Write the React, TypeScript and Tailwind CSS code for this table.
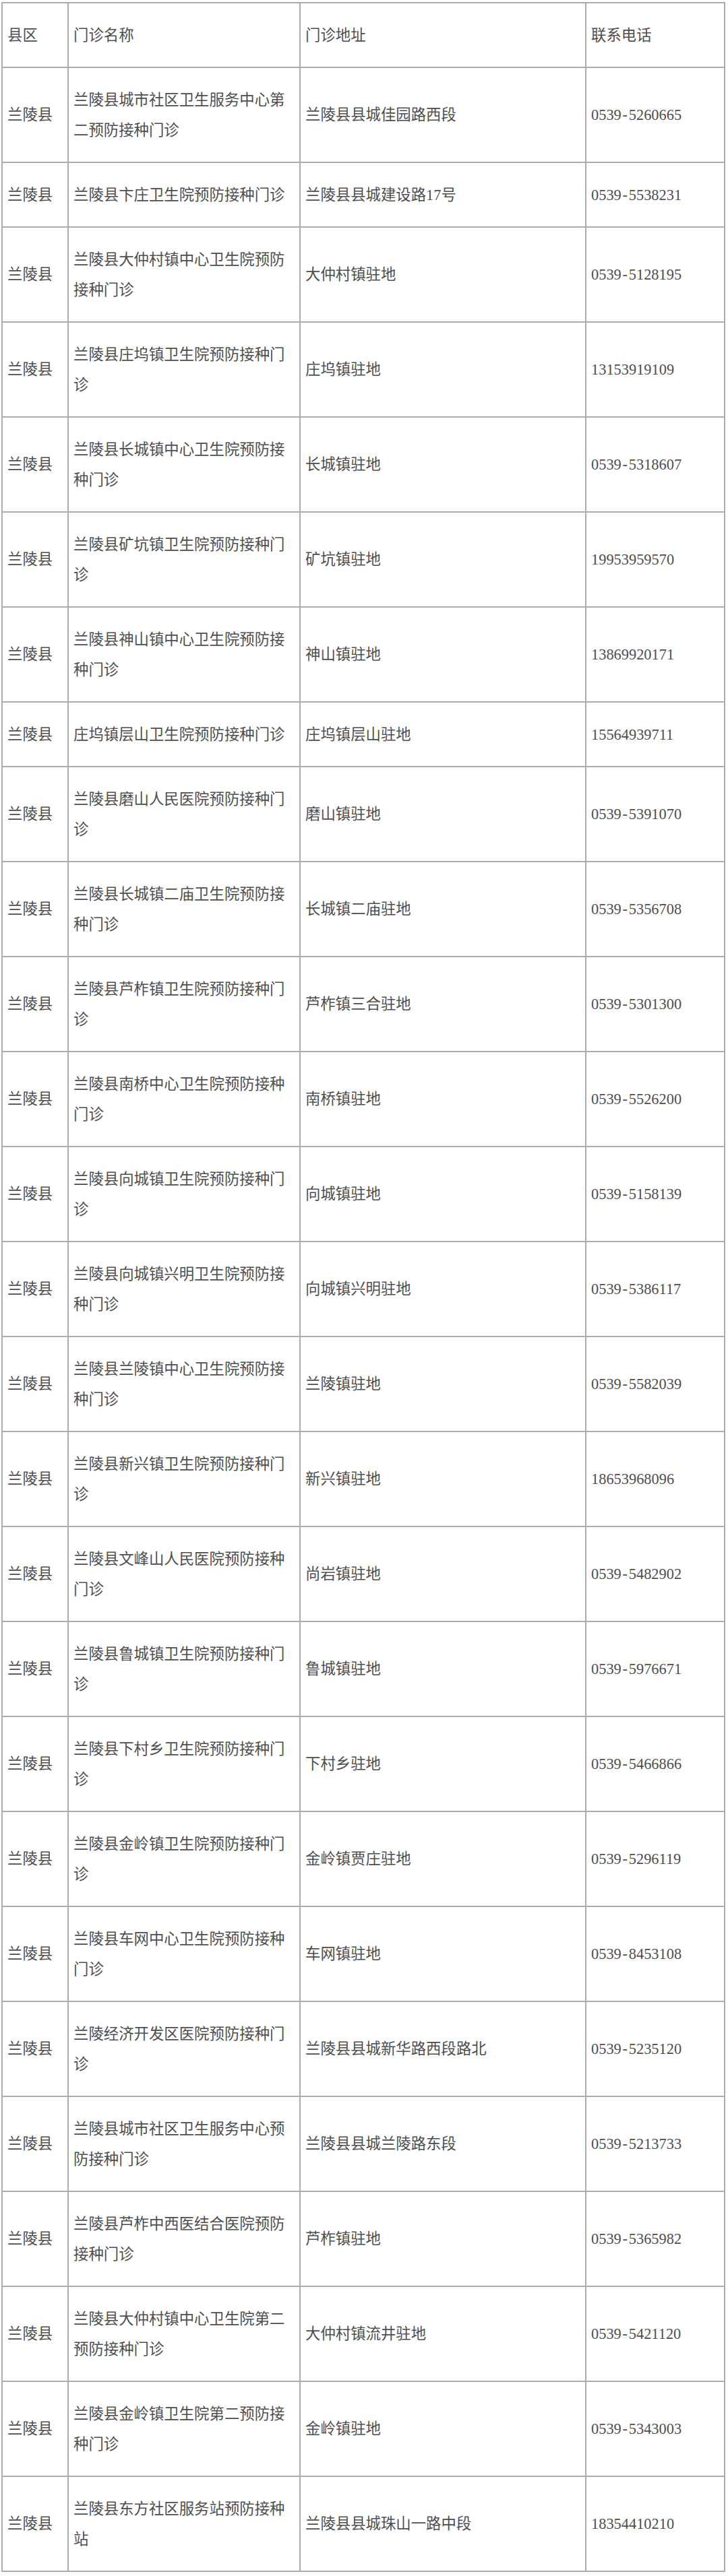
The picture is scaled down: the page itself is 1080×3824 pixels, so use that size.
const rows: [string, string, string][] = [
  ['兰陵县城市社区卫生服务中心第二预防接种门诊', '兰陵县县城佳园路西段', '0539-5260665'],
  ['兰陵县卞庄卫生院预防接种门诊', '兰陵县县城建设路17号', '0539-5538231'],
  ['兰陵县大仲村镇中心卫生院预防接种门诊', '大仲村镇驻地', '0539-5128195'],
  ['兰陵县庄坞镇卫生院预防接种门诊', '庄坞镇驻地', '13153919109'],
  ['兰陵县长城镇中心卫生院预防接种门诊', '长城镇驻地', '0539-5318607'],
  ['兰陵县矿坑镇卫生院预防接种门诊', '矿坑镇驻地', '19953959570'],
  ['兰陵县神山镇中心卫生院预防接种门诊', '神山镇驻地', '13869920171'],
  ['庄坞镇层山卫生院预防接种门诊', '庄坞镇层山驻地', '15564939711'],
  ['兰陵县磨山人民医院预防接种门诊', '磨山镇驻地', '0539-5391070'],
  ['兰陵县长城镇二庙卫生院预防接种门诊', '长城镇二庙驻地', '0539-5356708'],
  ['兰陵县芦柞镇卫生院预防接种门诊', '芦柞镇三合驻地', '0539-5301300'],
  ['兰陵县南桥中心卫生院预防接种门诊', '南桥镇驻地', '0539-5526200'],
  ['兰陵县向城镇卫生院预防接种门诊', '向城镇驻地', '0539-5158139'],
  ['兰陵县向城镇兴明卫生院预防接种门诊', '向城镇兴明驻地', '0539-5386117'],
  ['兰陵县兰陵镇中心卫生院预防接种门诊', '兰陵镇驻地', '0539-5582039'],
  ['兰陵县新兴镇卫生院预防接种门诊', '新兴镇驻地', '18653968096'],
  ['兰陵县文峰山人民医院预防接种门诊', '尚岩镇驻地', '0539-5482902'],
  ['兰陵县鲁城镇卫生院预防接种门诊', '鲁城镇驻地', '0539-5976671'],
  ['兰陵县下村乡卫生院预防接种门诊', '下村乡驻地', '0539-5466866'],
  ['兰陵县金岭镇卫生院预防接种门诊', '金岭镇贾庄驻地', '0539-5296119'],
  ['兰陵县车网中心卫生院预防接种门诊', '车网镇驻地', '0539-8453108'],
  ['兰陵经济开发区医院预防接种门诊', '兰陵县县城新华路西段路北', '0539-5235120'],
  ['兰陵县城市社区卫生服务中心预防接种门诊', '兰陵县县城兰陵路东段', '0539-5213733'],
  ['兰陵县芦柞中西医结合医院预防接种门诊', '芦柞镇驻地', '0539-5365982'],
  ['兰陵县大仲村镇中心卫生院第二预防接种门诊', '大仲村镇流井驻地', '0539-5421120'],
  ['兰陵县金岭镇卫生院第二预防接种门诊', '金岭镇驻地', '0539-5343003'],
  ['兰陵县东方社区服务站预防接种站', '兰陵县县城珠山一路中段', '18354410210'],
];

const cell = 'border-2 border-[#acacac] pl-[7px] pr-[8px] py-[24.5px] align-middle';

function Phone({ value }: { value: string }) {
  const parts = value.split('-');
  if (parts.length < 2) return <>{value}</>;
  return (
    <>
      {parts[0]}
      <span className="inline-block w-[11px] text-center">-</span>
      {parts[1]}
    </>
  );
}

export default function App() {
  return (
    <div className="bg-white min-h-[3824px] pt-[3px] pl-[2px]">
      <table
        className="table-fixed border-collapse w-[1072px] text-[22.4px] leading-[45px] text-[#4e4e4e]"
        style={{ fontFamily: '"Liberation Serif", "Noto Sans CJK SC", sans-serif' }}
      >
        <colgroup>
          <col className="w-[98px]" />
          <col className="w-[344px]" />
          <col className="w-[424px]" />
          <col className="w-[206px]" />
        </colgroup>
        <thead>
          <tr>
            <td className={cell}>县区</td>
            <td className={cell}>门诊名称</td>
            <td className={cell}>门诊地址</td>
            <td className={cell}>联系电话</td>
          </tr>
        </thead>
        <tbody>
          {rows.map(([name, addr, tel], i) => (
            <tr key={i}>
              <td className={cell}>兰陵县</td>
              <td className={cell}>{name}</td>
              <td className={cell}>{addr}</td>
              <td className={cell}>
                <Phone value={tel} />
              </td>
            </tr>
          ))}
        </tbody>
      </table>
    </div>
  );
}
